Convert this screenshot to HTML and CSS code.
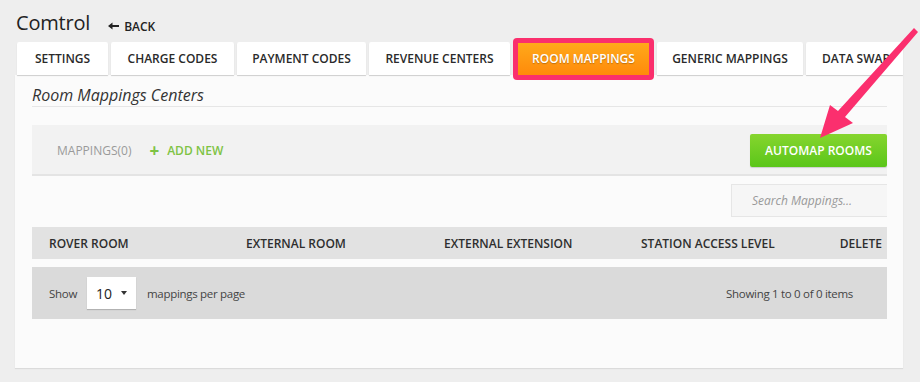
FILE: index.html
```html
<!DOCTYPE html>
<html>
<head>
<meta charset="utf-8">
<link rel="stylesheet" href="styles.css">
</head>
<body>
<div class="page">
  <div class="header">
    <h1 class="title">Comtrol</h1>
    <a class="back"><svg class="back-arrow" width="11" height="8" viewBox="0 0 11 8"><path d="M0 4 L4.5 0.5 L4.5 3 L11 3 L11 5 L4.5 5 L4.5 7.5 Z" fill="#222"/></svg>BACK</a>
  </div>
  <nav class="tabs">
    <div class="tab tab-settings">SETTINGS</div>
    <div class="tab tab-charge">CHARGE CODES</div>
    <div class="tab tab-payment">PAYMENT CODES</div>
    <div class="tab tab-revenue">REVENUE CENTERS</div>
    <div class="tab-active-wrap"><div class="tab tab-active">ROOM MAPPINGS</div></div>
    <div class="tab tab-generic">GENERIC MAPPINGS</div>
    <div class="tab tab-last">DATA SWAP</div>
  </nav>
  <section class="panel">
    <h2 class="panel-title">Room Mappings Centers</h2>
    <div class="toolbar">
      <div class="toolbar-left">
        <span class="count">MAPPINGS(0)</span>
        <a class="add-new"><span class="plus">+</span>ADD NEW</a>
      </div>
      <button class="automap">AUTOMAP ROOMS</button>
    </div>
    <div class="search-row">
      <div class="search">Search Mappings...</div>
    </div>
    <div class="thead">
      <div class="th">ROVER ROOM</div>
      <div class="th">EXTERNAL ROOM</div>
      <div class="th">EXTERNAL EXTENSION</div>
      <div class="th">STATION ACCESS LEVEL</div>
      <div class="th th-delete">DELETE</div>
    </div>
    <div class="footer">
      <div class="footer-left">
        <span>Show</span>
        <div class="select"><span>10</span><span class="caret"></span></div>
        <span>mappings per page</span>
      </div>
      <div class="footer-right">Showing 1 to 0 of 0 items</div>
    </div>
  </section>
  <svg class="annot-arrow" width="920" height="382" viewBox="0 0 920 382">
    <polygon points="914,28 918,32 845,117 853,123 820,138 830,105 838,111" fill="#fb2f6e"/>
  </svg>
</div>
</body>
</html>
```
FILE: styles.css
```css
* { box-sizing: border-box; }
html, body { margin: 0; padding: 0; }
body {
  background: #eeeeee;
  font-family: "Open Sans", "Liberation Sans", sans-serif;
  color: #333;
  width: 920px;
  height: 382px;
  overflow: hidden;
}
.page { position: relative; width: 920px; height: 382px; }
.header {
  display: flex;
  align-items: baseline;
  padding: 9px 0 0 16px;
  height: 42px;
}
.title {
  margin: 0;
  font-size: 20px;
  font-weight: 400;
  color: #222;
  line-height: 28px;
  letter-spacing: -0.2px;
}
.back {
  margin-left: 18px;
  font-size: 12px;
  font-weight: 600;
  color: #222;
  display: flex;
  align-items: center;
}
.back-arrow { margin-right: 5px; }
.tabs {
  display: flex;
  gap: 3px;
  margin-left: 17px;
  height: 33px;
  align-items: flex-start;
}
.tab {
  height: 33px;
  line-height: 33px;
  padding: 0;
  text-align: center;
  background: #fff;
  font-size: 12px;
  font-weight: 600;
  color: #2a2a2a;
  white-space: nowrap;
  box-shadow: 0 1px 1px rgba(0,0,0,0.18);
  border-radius: 2px 2px 0 0;
}
.tab-settings { width: 91px; }
.tab-charge { width: 123px; }
.tab-payment { width: 129px; }
.tab-revenue { width: 141px; }
.tab-generic { width: 146px; }
.tab-active-wrap {
  margin-top: -4px;
  background: #fa2f6d;
  padding: 5px;
  border-radius: 4px;
}
.tab-active {
  width: 131px;
  background: linear-gradient(#ffa91a, #ff8a0a);
  color: #fff;
  box-shadow: none;
  border-radius: 0;
  height: 32px;
  line-height: 32px;
  text-shadow: 0 1px 1px rgba(0,0,0,0.25);
}
.tab-last { width: 97px; overflow: hidden; text-align: left; padding-left: 16px; }
.panel {
  margin-left: 15px;
  width: 888px;
  height: 293px;
  background: #fbfbfb;
  padding: 0 16px 0 17px;
  box-shadow: 0 1px 1px rgba(0,0,0,0.08);
}
.panel-title {
  margin: 0;
  padding-top: 9px;
  height: 32px;
  font-size: 16px;
  font-weight: 400;
  font-style: italic;
  color: #333;
  line-height: 22px;
  border-bottom: 1px solid #e6e6e6;
}
.toolbar {
  margin-top: 18px;
  height: 51px;
  background: #f2f2f2;
  border-bottom: 2px solid #e4e4e4;
  display: flex;
  align-items: center;
  justify-content: space-between;
}
.toolbar-left { display: flex; align-items: center; padding-left: 25px; padding-top: 2px; }
.count { font-size: 12px; color: #9a9a9a; }
.add-new { margin-left: 18px; font-size: 12px; font-weight: 600; color: #7ec344; display: flex; align-items: center; }
.plus { font-size: 17px; margin-right: 8px; font-weight: 700; line-height: 12px; }
.automap {
  width: 137px;
  height: 33px;
  border: none;
  border-radius: 2px;
  background: linear-gradient(#86d52e, #5bc61a);
  color: #fff;
  font-family: inherit;
  font-size: 12px;
  font-weight: 600;
  margin-top: 2px;
  box-shadow: 0 1px 1px rgba(0,0,0,0.15);
}
.search-row {
  display: flex;
  justify-content: flex-end;
  padding-top: 8px;
  height: 51px;
}
.search {
  width: 156px;
  height: 33px;
  background: #f6f6f6;
  border: 1px solid #e6e6e6;
  border-right: none;
  padding-left: 20px;
  line-height: 31px;
  font-size: 12px;
  font-style: italic;
  color: #999;
}
.thead {
  display: grid;
  grid-template-columns: 197px 198px 197px 197px 1fr;
  height: 32px;
  align-items: center;
  background: #e2e2e2;
}
.th { padding-left: 17px; font-size: 12px; font-weight: 600; color: #2e2e2e; white-space: nowrap; }
.th-delete { text-align: right; padding-right: 5px; }
.footer {
  margin-top: 8px;
  height: 52px;
  background: #dadada;
  display: flex;
  align-items: center;
  justify-content: space-between;
  padding: 0 34px 0 17px;
  font-size: 11.5px;
  letter-spacing: -0.3px;
  color: #444;
}
.footer-left { display: flex; align-items: center; }
.select {
  width: 49px;
  height: 32px;
  margin: 0 11px 0 10px;
  background: #fff;
  box-shadow: 0 1px 1px rgba(0,0,0,0.18);
  display: flex;
  align-items: center;
  justify-content: space-between;
  padding: 0 9px 0 9px;
  font-size: 14px;
  letter-spacing: 0;
  color: #222;
}
.caret {
  width: 0; height: 0;
  border-left: 3px solid transparent;
  border-right: 3px solid transparent;
  border-top: 4px solid #333;
}
.annot-arrow { position: absolute; left: 0; top: 0; pointer-events: none; }
```
